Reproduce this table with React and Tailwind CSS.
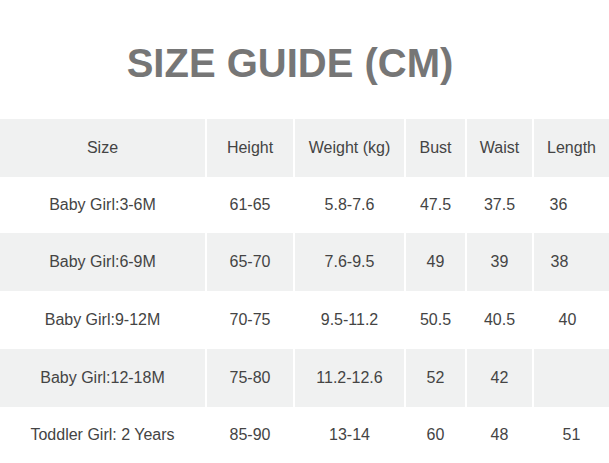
import React from "react";

const headers = ["Size", "Height", "Weight (kg)", "Bust", "Waist", "Length"];

const rows = [
  ["Baby Girl:3-6M", "61-65", "5.8-7.6", "47.5", "37.5", "36"],
  ["Baby Girl:6-9M", "65-70", "7.6-9.5", "49", "39", "38"],
  ["Baby Girl:9-12M", "70-75", "9.5-11.2", "50.5", "40.5", "40"],
  ["Baby Girl:12-18M", "75-80", "11.2-12.6", "52", "42", ""],
  ["Toddler Girl: 2 Years", "85-90", "13-14", "60", "48", "51"],
];

const rowHeights = ["h-[56px]", "h-[58px]", "h-[58px]", "h-[58px]", "h-[56px]"];

// small nudges for the Length column, it sits a little left of centre
const lengthPad = ["pr-[26px]", "pr-[24px]", "pr-[8px]", "", "pr-[0px]"];

export default function App() {
  return (
    <div
      className="w-[609px] h-[463px] bg-white overflow-hidden"
      style={{ fontFamily: '"Liberation Sans", Arial, sans-serif' }}
    >
      {/* Title */}
      <div className="h-[119px] pt-[43px] pr-[29px] flex justify-center">
        <h1 className="text-[40px] leading-[40px] font-bold text-[#767676]">
          SIZE GUIDE (CM)
        </h1>
      </div>

      {/* Table */}
      <div className="grid grid-cols-[205px_86px_109px_59px_65px_75px] gap-x-[2px] text-[16px] text-[#444]">
        {headers.map((h) => (
          <div
            key={h}
            className="h-[58px] bg-[#f0f1f1] flex items-center justify-center"
          >
            {h}
          </div>
        ))}

        {rows.map((row, i) =>
          row.map((cell, j) => (
            <div
              key={i + "-" + j}
              className={
                "flex items-center justify-center " +
                rowHeights[i] +
                " " +
                (i % 2 === 1 ? "bg-[#f0f1f1]" : "bg-white") +
                " " +
                (j === 5 ? lengthPad[i] : "")
              }
            >
              {cell}
            </div>
          ))
        )}
      </div>
    </div>
  );
}
